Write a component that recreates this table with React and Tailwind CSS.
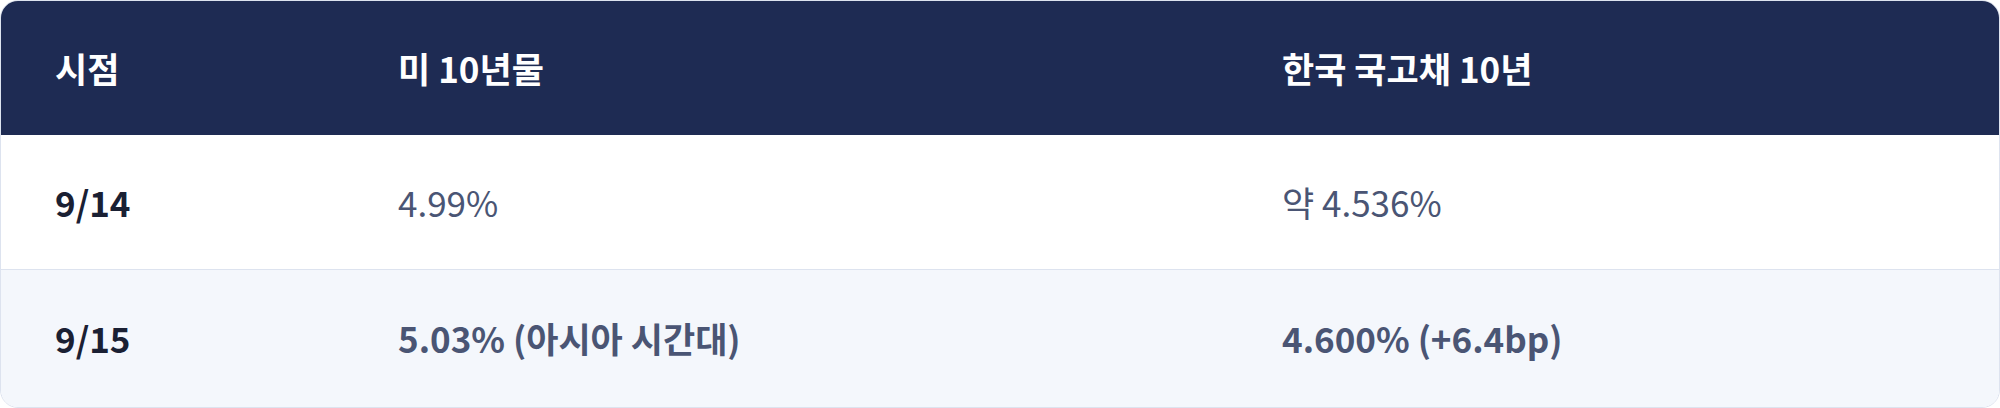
export default function App() {
  const font = { fontFamily: '"Noto Sans CJK KR", "Noto Sans", sans-serif' };
  return (
    <div className="w-[2000px] h-[408px] bg-white" style={font}>
      <div className="w-[2000px] h-[408px] rounded-[18px] border border-[#dde3ef] overflow-hidden flex flex-col">
        <div className="h-[134px] bg-[#1e2b53] flex items-center text-white font-bold text-[35px]">
          <div className="w-[343px] pl-[54px]">시점</div>
          <div className="w-[884px] pl-[54px]">미 10년물</div>
          <div className="flex-1 pl-[54px]">한국 국고채 10년</div>
        </div>
        <div className="h-[135px] bg-white flex items-center text-[35px] border-b border-[#dde3ef]">
          <div className="w-[343px] pl-[54px] font-bold text-[#1a2033]">9/14</div>
          <div className="w-[884px] pl-[54px] text-[#4a5574]">4.99%</div>
          <div className="flex-1 pl-[54px] text-[#4a5574]">약 4.536%</div>
        </div>
        <div className="flex-1 bg-[#f4f7fc] flex items-center text-[35px]">
          <div className="w-[343px] pl-[54px] font-bold text-[#1a2033]">9/15</div>
          <div className="w-[884px] pl-[54px] font-semibold text-[#4a5574]">5.03% (아시아 시간대)</div>
          <div className="flex-1 pl-[54px] font-semibold text-[#4a5574]">4.600% (+6.4bp)</div>
        </div>
      </div>
    </div>
  );
}
